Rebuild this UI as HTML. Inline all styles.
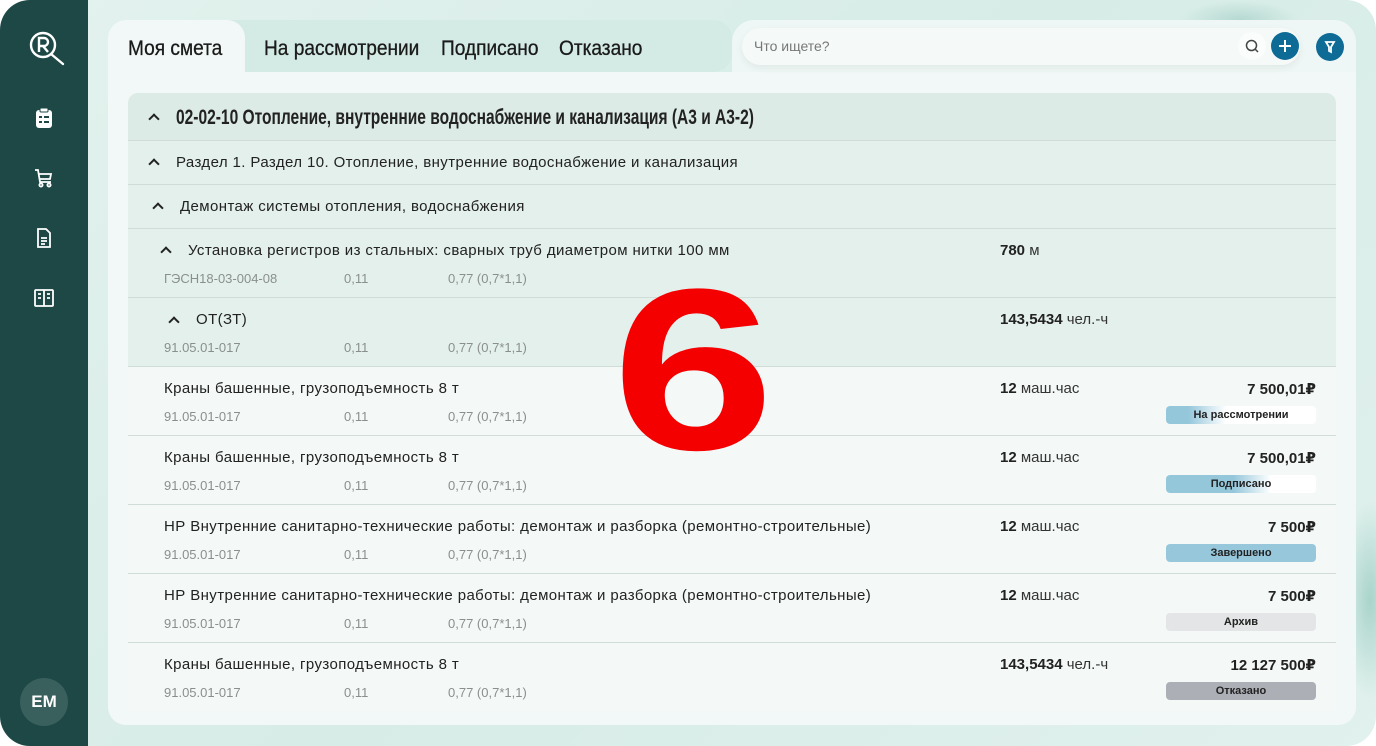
<!DOCTYPE html>
<html><head><meta charset="utf-8"><style>
*{margin:0;padding:0;box-sizing:border-box}
body{width:1376px;height:746px;overflow:hidden;background:#fff;font-family:"Liberation Sans","DejaVu Sans",sans-serif;color:#222;position:relative}
.frame{position:absolute;left:0;top:0;width:1376px;height:746px;border-radius:30px;background:linear-gradient(135deg,#e3f2ee,#d7ece7 50%,#e1f1ed);overflow:hidden}
.side{position:absolute;left:0;top:0;width:88px;height:746px;background:#1e4846;border-radius:30px 0 0 30px}
.ic{position:absolute;left:32px;width:24px;height:24px}
.av{position:absolute;left:20px;top:678px;width:48px;height:48px;border-radius:50%;background:#3a605d;color:#fff;font-weight:bold;font-size:17px;text-align:center;line-height:48px}
.panel{position:absolute;left:108px;top:72px;width:1248px;height:653px;background:#f2f8f7;border-radius:0 0 18px 18px}
.tabbar{position:absolute;left:108px;top:20px;width:624px;height:52px;background:#d4ebe5;border-radius:18px 18px 18px 0}
.tabact{position:absolute;left:108px;top:20px;width:137px;height:60px;background:#f2f8f7;border-radius:18px 18px 0 0}
.tab{position:absolute;top:37px;font-size:21px;color:#1a1a1a;transform:scaleX(.91);transform-origin:left top;white-space:nowrap;-webkit-text-stroke:.3px #1a1a1a}
.sbar{position:absolute;left:732px;top:20px;width:624px;height:60px;background:#eef7f5;border-radius:22px 22px 0 0}
.sin{position:absolute;left:742px;top:28px;width:558px;height:37px;background:#f5faf9;border-radius:19px;box-shadow:0 3px 8px rgba(0,0,0,.06);font-size:14px;color:#777;padding:10px 12px}
.btn{position:absolute;width:28px;height:28px;border-radius:50%}
.tbl{position:absolute;left:128px;top:93px;width:1208px;height:618px;border-radius:10px 10px 0 0;overflow:hidden}
.r{position:absolute;left:0;width:1208px;border-bottom:1px solid #cfdcd8}
.t{position:absolute;font-size:15px;letter-spacing:.4px;color:#222;white-space:nowrap}
.s{position:absolute;font-size:13px;color:#8a8f8e;white-space:nowrap}
.q{position:absolute;left:872px;font-size:15px;color:#333}
.q b{color:#222}
.p{position:absolute;right:20px;font-size:15px;font-weight:bold}
.bd{position:absolute;left:1038px;width:150px;height:18px;border-radius:4px;font-size:11px;font-weight:bold;text-align:center;line-height:18px;color:#222}
.car{display:inline-block;width:8px;height:8px;border-left:2px solid #222;border-top:2px solid #222;transform:rotate(45deg);position:absolute}
.six{position:absolute;left:612px;top:255px;font-size:230px;font-weight:bold;color:#f40000;line-height:1;transform:scaleX(1.27);transform-origin:left top}
</style></head><body>
<div class="frame">
<div style="position:absolute;left:1180px;top:0;width:120px;height:40px;background:radial-gradient(#b5d9d1,transparent 70%)"></div>
<div style="position:absolute;left:1340px;top:500px;width:60px;height:200px;background:radial-gradient(#a9d4cb,transparent 70%)"></div>
</div>
<div class="side">
<svg class="ic" style="top:30px;left:28px;width:40px;height:36px" viewBox="0 0 40 36" fill="none" stroke="#fff" stroke-width="2.4"><circle cx="15" cy="15" r="12"/><path d="M23 24l12 10" stroke-linecap="round"/><path d="M11 22V8h5a4 4 0 010 8h-5M15 16l5 6"/></svg>
<svg class="ic" style="top:106px" viewBox="0 0 24 24"><rect x="4" y="4" width="16" height="18" rx="3" fill="#fff"/><rect x="8" y="2" width="8" height="4" rx="1" fill="#fff" stroke="#1e4846"/><g fill="#1e4846"><rect x="7" y="10" width="3" height="2"/><rect x="12" y="10" width="5" height="2"/><rect x="7" y="15" width="3" height="2"/><rect x="12" y="15" width="5" height="2"/></g></svg>
<svg class="ic" style="top:166px" viewBox="0 0 24 24" fill="none" stroke="#fff" stroke-width="1.8"><path d="M3 4h3l2 12h11M7 8h12l-1 5H8"/><circle cx="9" cy="19" r="1.6"/><circle cx="17" cy="19" r="1.6"/></svg>
<svg class="ic" style="top:226px" viewBox="0 0 24 24" fill="none" stroke="#fff" stroke-width="1.8"><path d="M6 3h8l4 4v14H6z"/><path d="M9 12h6M9 15h6M9 18h4"/></svg>
<svg class="ic" style="top:286px" viewBox="0 0 24 24" fill="none" stroke="#fff" stroke-width="1.8"><rect x="3" y="4" width="18" height="16" rx="1"/><path d="M12 4v16M6 8h3M6 12h3M15 8h3M15 12h3"/></svg>
<div class="av">EM</div>
</div>
<div class="tabbar"></div>
<div class="sbar"></div>
<div class="panel"></div>
<div class="tabact"></div>
<div class="tab" style="left:128px">Моя смета</div>
<div class="tab" style="left:264px">На рассмотрении</div>
<div class="tab" style="left:441px">Подписано</div>
<div class="tab" style="left:559px">Отказано</div>
<div class="sin">Что ищете?</div>
<div class="btn" style="left:1238px;top:32px;background:#fafdfc"><svg width="28" height="28" viewBox="0 0 28 28" fill="none" stroke="#444" stroke-width="1.5"><circle cx="13.5" cy="13.5" r="5"/><path d="M17 17l3 3"/></svg></div>
<div class="btn" style="left:1271px;top:32px;background:#0e6b96"><svg width="28" height="28" viewBox="0 0 28 28" stroke="#fff" stroke-width="2"><path d="M14 8v12M8 14h12"/></svg></div>
<div class="btn" style="left:1316px;top:33px;background:#0e6b96"><svg width="28" height="28" viewBox="0 0 28 28" fill="none" stroke="#fff" stroke-width="1.8"><path d="M10 9h8l-3 5v5l-2-1v-4z"/></svg></div>
<div class="tbl">
<div class="r" style="top:0;height:48px;background:#dcebe6"><span class="car" style="left:22px;top:22px"></span><div class="t" style="left:48px;top:13px;font-size:21px;letter-spacing:0;font-weight:bold;transform:scaleX(.74);transform-origin:left top">02-02-10 Отопление, внутренние водоснабжение и канализация (А3 и А3-2)</div></div>
<div class="r" style="top:48px;height:44px;background:#e4f0ec"><span class="car" style="left:22px;top:19px"></span><div class="t" style="left:48px;top:13px">Раздел 1. Раздел 10. Отопление, внутренние водоснабжение и канализация</div></div>
<div class="r" style="top:92px;height:44px;background:#e4f0ec"><span class="car" style="left:26px;top:19px"></span><div class="t" style="left:52px;top:13px">Демонтаж системы отопления, водоснабжения</div></div>
<div class="r" style="top:136px;height:69px;background:#e4f0ec"><span class="car" style="left:34px;top:19px"></span><div class="t" style="left:60px;top:13px">Установка регистров из стальных: сварных труб диаметром нитки 100 мм</div><div class="q" style="top:13px"><b>780</b> м</div><div class="s" style="left:36px;top:42px">ГЭСН18-03-004-08</div><div class="s" style="left:216px;top:42px">0,11</div><div class="s" style="left:320px;top:42px">0,77 (0,7*1,1)</div></div>
<div class="r" style="top:205px;height:69px;background:#e4f0ec"><span class="car" style="left:42px;top:20px"></span><div class="t" style="left:68px;top:13px">ОТ(ЗТ)</div><div class="q" style="top:13px"><b>143,5434</b> чел.-ч</div><div class="s" style="left:36px;top:42px">91.05.01-017</div><div class="s" style="left:216px;top:42px">0,11</div><div class="s" style="left:320px;top:42px">0,77 (0,7*1,1)</div></div>
<div class="r" style="top:274px;height:69px;background:#f4f9f8"><div class="t" style="left:36px;top:13px">Краны башенные, грузоподъемность 8 т</div><div class="q" style="top:13px"><b>12</b> маш.час</div><div class="p" style="top:13px">7 500,01₽</div><div class="bd" style="top:39px;background:linear-gradient(90deg,#95c7db 15%,#fff 40%)">На рассмотрении</div><div class="s" style="left:36px;top:42px">91.05.01-017</div><div class="s" style="left:216px;top:42px">0,11</div><div class="s" style="left:320px;top:42px">0,77 (0,7*1,1)</div></div>
<div class="r" style="top:343px;height:69px;background:#f4f9f8"><div class="t" style="left:36px;top:13px">Краны башенные, грузоподъемность 8 т</div><div class="q" style="top:13px"><b>12</b> маш.час</div><div class="p" style="top:13px">7 500,01₽</div><div class="bd" style="top:39px;background:linear-gradient(90deg,#95c7db 45%,#fff 70%)">Подписано</div><div class="s" style="left:36px;top:42px">91.05.01-017</div><div class="s" style="left:216px;top:42px">0,11</div><div class="s" style="left:320px;top:42px">0,77 (0,7*1,1)</div></div>
<div class="r" style="top:412px;height:69px;background:#f4f9f8"><div class="t" style="left:36px;top:13px">НР Внутренние санитарно-технические работы: демонтаж и разборка (ремонтно-строительные)</div><div class="q" style="top:13px"><b>12</b> маш.час</div><div class="p" style="top:13px">7 500₽</div><div class="bd" style="top:39px;background:#97c7db">Завершено</div><div class="s" style="left:36px;top:42px">91.05.01-017</div><div class="s" style="left:216px;top:42px">0,11</div><div class="s" style="left:320px;top:42px">0,77 (0,7*1,1)</div></div>
<div class="r" style="top:481px;height:69px;background:#f4f9f8"><div class="t" style="left:36px;top:13px">НР Внутренние санитарно-технические работы: демонтаж и разборка (ремонтно-строительные)</div><div class="q" style="top:13px"><b>12</b> маш.час</div><div class="p" style="top:13px">7 500₽</div><div class="bd" style="top:39px;background:#e3e5e6">Архив</div><div class="s" style="left:36px;top:42px">91.05.01-017</div><div class="s" style="left:216px;top:42px">0,11</div><div class="s" style="left:320px;top:42px">0,77 (0,7*1,1)</div></div>
<div class="r" style="top:550px;height:69px;background:#f4f9f8;border:none"><div class="t" style="left:36px;top:13px">Краны башенные, грузоподъемность 8 т</div><div class="q" style="top:13px"><b>143,5434</b> чел.-ч</div><div class="p" style="top:13px">12 127 500₽</div><div class="bd" style="top:39px;background:#acafb5">Отказано</div><div class="s" style="left:36px;top:42px">91.05.01-017</div><div class="s" style="left:216px;top:42px">0,11</div><div class="s" style="left:320px;top:42px">0,77 (0,7*1,1)</div></div>
</div>
<div class="six">6</div>
</body></html>
